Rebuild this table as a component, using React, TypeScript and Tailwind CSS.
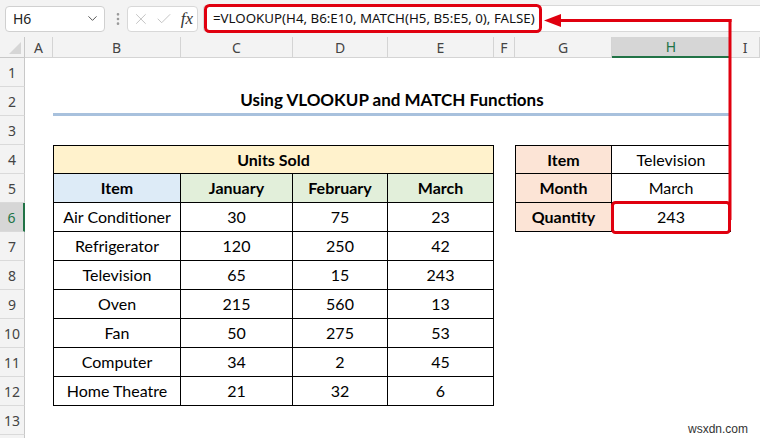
import { ChevronDown, EllipsisVertical, X, Check } from "lucide-react";

const COLS = ["A", "B", "C", "D", "E", "F", "G", "H", "I"];

const DATA: [string, number, number, number][] = [
  ["Air Conditioner", 30, 75, 23],
  ["Refrigerator", 120, 250, 42],
  ["Television", 65, 15, 243],
  ["Oven", 215, 560, 13],
  ["Fan", 50, 275, 53],
  ["Computer", 34, 2, 45],
  ["Home Theatre", 21, 32, 6],
];

const HDR_ROW = [
  "row-start-2", "row-start-3", "row-start-4", "row-start-5", "row-start-6",
  "row-start-7", "row-start-8", "row-start-9", "row-start-10", "row-start-11",
  "row-start-12", "row-start-13", "row-start-14", "row-start-15",
];

const cell = "flex items-center justify-center border-r border-b border-black";

export default function App() {
  return (
    <div className="relative w-[760px] h-[438px] overflow-hidden bg-white text-black font-['Lato',sans-serif]">
      {/* formula bar */}
      <div className="h-[37px] bg-[#f3f3f3] flex items-center">
        <div className="ml-[5px] w-[100px] h-[26px] bg-white border border-[#d0d0d0] rounded-[4px] flex items-center justify-between pl-[7px] pr-[4px]">
          <span className="text-[14px] text-[#222] font-['Noto_Sans',sans-serif]">H6</span>
          <ChevronDown size={15} strokeWidth={1.6} className="text-[#555]" />
        </div>
        <EllipsisVertical size={16} strokeWidth={2} className="ml-[5px] text-[#9a9a9a]" />
        <div className="ml-[1px] w-[71px] h-[26px] bg-white border border-[#d8d8d8] rounded-[4px] flex items-center px-[4px]">
          <X size={18} strokeWidth={1.2} className="text-[#bdbdbd]" />
          <Check size={18} strokeWidth={1.2} className="ml-[5px] text-[#bdbdbd]" />
          <span className="ml-[8px] text-[17px] italic text-[#333] font-['Liberation_Serif',serif] leading-none">fx</span>
        </div>
        <div className="ml-[5px] flex-1 h-[27px] bg-white border-y border-l border-[#d8d8d8] rounded-l-[4px] flex items-center pl-[9px]">
          <span className="text-[13.3px] text-[#111] font-['Noto_Sans',sans-serif]">
            =VLOOKUP(H4, B6:E10, MATCH(H5, B5:E5, 0), FALSE)
          </span>
        </div>
      </div>

      {/* sheet */}
      <div className="grid grid-cols-[25px_28px_128px_112px_95px_106px_21px_97px_119px_29px] grid-rows-[21px_repeat(14,29px)] text-[16px]">
        {/* corner */}
        <div className="col-start-1 row-start-1 bg-[#f3f3f3] border-r border-b border-[#c8c8c8] flex items-end justify-end p-[3px]">
          <svg width="12" height="12" viewBox="0 0 12 12">
            <polygon points="12,0 12,12 0,12" fill="#d6d6d6" />
          </svg>
        </div>
        {/* column headers */}
        {COLS.map((c, i) => (
          <div
            key={c}
            className={`row-start-1 flex items-center justify-center text-[14px] font-['Noto_Sans',sans-serif] ${
              c === "H"
                ? "bg-[#d6d6d6] text-[#217346] border-b-2 border-[#217346] border-r border-r-[#c8c8c8]"
                : "bg-[#f3f3f3] text-[#444] border-b border-r border-[#d4d4d4]"
            }`}
            style={{ gridColumnStart: i + 2 }}
          >
            {c}
          </div>
        ))}
        {/* row headers */}
        {HDR_ROW.map((r, i) => (
          <div
            key={r}
            className={`col-start-1 ${r} flex items-center justify-center text-[14px] font-['Noto_Sans',sans-serif] border-b border-[#dadada] ${
              i === 5
                ? "bg-[#d6d6d6] text-[#217346] border-r-2 border-r-[#217346]"
                : "bg-[#f3f3f3] text-[#444] border-r border-r-[#c8c8c8]"
            }`}
          >
            {i < 13 ? i + 1 : ""}
          </div>
        ))}

        {/* title */}
        <div className="col-start-3 col-span-7 row-start-3 flex items-center justify-center border-b-[3px] border-[#a8c1dd] font-bold text-[17px]">
          Using VLOOKUP and MATCH Functions
        </div>

        {/* left table */}
        <div className={`col-start-3 col-span-4 row-start-5 ${cell} border-t border-l bg-[#fff2cc] font-bold`}>
          Units Sold
        </div>
        <div className={`col-start-3 row-start-6 ${cell} border-l bg-[#ddebf7] font-bold`}>Item</div>
        <div className={`col-start-4 row-start-6 ${cell} bg-[#e2efda] font-bold`}>January</div>
        <div className={`col-start-5 row-start-6 ${cell} bg-[#e2efda] font-bold`}>February</div>
        <div className={`col-start-6 row-start-6 ${cell} bg-[#e2efda] font-bold`}>March</div>
        {DATA.map((row, i) => {
          const r = HDR_ROW[i + 5];
          return [
            <div key={`a${i}`} className={`col-start-3 ${r} ${cell} border-l`}>{row[0]}</div>,
            <div key={`b${i}`} className={`col-start-4 ${r} ${cell}`}>{row[1]}</div>,
            <div key={`c${i}`} className={`col-start-5 ${r} ${cell}`}>{row[2]}</div>,
            <div key={`d${i}`} className={`col-start-6 ${r} ${cell}`}>{row[3]}</div>,
          ];
        })}

        {/* right table */}
        <div className={`col-start-8 row-start-5 ${cell} border-t border-l bg-[#fce4d6] font-bold`}>Item</div>
        <div className={`col-start-9 row-start-5 ${cell} border-t`}>Television</div>
        <div className={`col-start-8 row-start-6 ${cell} border-l bg-[#fce4d6] font-bold`}>Month</div>
        <div className={`col-start-9 row-start-6 ${cell}`}>March</div>
        <div className={`col-start-8 row-start-7 ${cell} border-l bg-[#fce4d6] font-bold`}>Quantity</div>
        <div className={`col-start-9 row-start-7 ${cell}`}>243</div>
      </div>

      {/* red annotations */}
      <svg className="absolute inset-0 pointer-events-none" width="760" height="438">
        <rect x="205.5" y="5.5" width="335" height="26" rx="4" fill="none" stroke="#e0000f" strokeWidth="3" />
        <rect x="612.5" y="202.5" width="117" height="30" rx="3" fill="none" stroke="#e0000f" strokeWidth="3" />
        <line x1="556" y1="20.5" x2="731.5" y2="20.5" stroke="#e0000f" strokeWidth="3" />
        <line x1="730" y1="19" x2="730" y2="220" stroke="#e0000f" strokeWidth="3" />
        <polygon points="544,20.5 561,14 561,27" fill="#e0000f" />
      </svg>

      <div className="absolute left-[688px] top-[420px] text-[12px] text-[#333] font-['Liberation_Sans',sans-serif]">
        wsxdn.com
      </div>
    </div>
  );
}
